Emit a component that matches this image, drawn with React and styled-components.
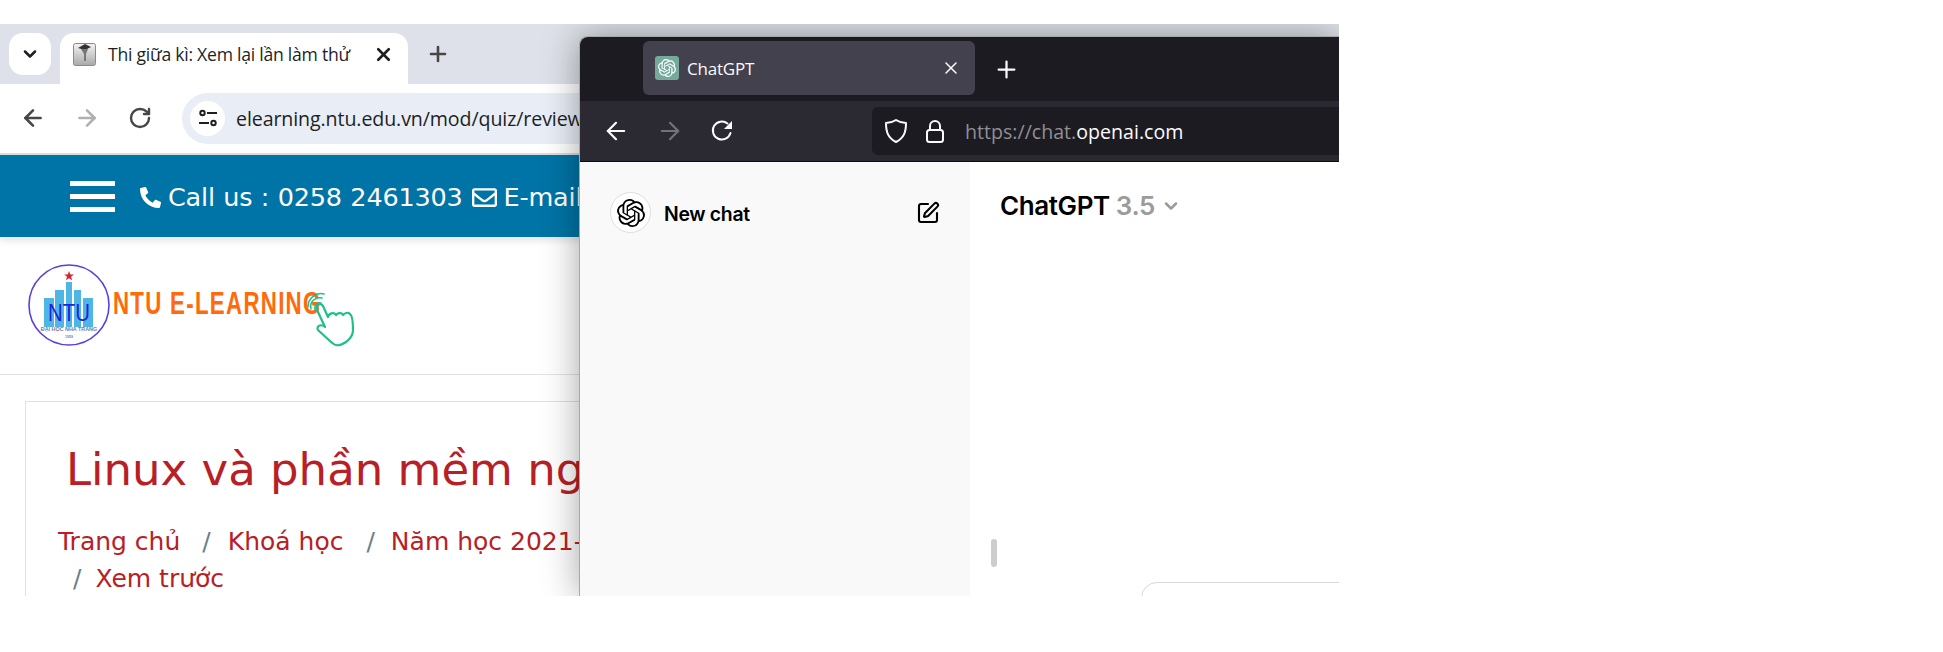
import React from "react";
import styled, { createGlobalStyle } from "styled-components";
import { ArrowLeft, ArrowRight, RotateCw, ChevronDown, X, Plus, SquarePen } from "lucide-react";
import { SiOpenai } from "react-icons/si";
import { FaPhone, FaRegEnvelope } from "react-icons/fa";

const Global = createGlobalStyle`
  html, body { margin: 0; padding: 0; background: #fff; }
  body { font-family: "Noto Sans", sans-serif; }
  * { box-sizing: border-box; }
`;

const Stage = styled.div`
  position: relative;
  width: 1339px;
  height: 572px;
  margin-top: 24px;
  overflow: hidden;
`;
const ChromeWindow = styled.div`
  width: 1339px;
  height: 572px;
  display: flex;
  flex-direction: column;
`;
const ChromeTabs = styled.div`
  height: 60px;
  flex: none;
  background: #dee1e9;
  display: flex;
  align-items: flex-start;
  padding: 9px 0 0 9px;
`;
const TabSearch = styled.div`
  width: 42px;
  height: 42px;
  border-radius: 14px;
  background: #fff;
  display: flex;
  align-items: center;
  justify-content: center;
  color: #1f1f1f;
  margin-right: 9px;
`;
const ChromeTab = styled.div`
  width: 348px;
  height: 51px;
  background: #fff;
  border-radius: 14px 14px 0 0;
  display: flex;
  align-items: center;
  padding: 0 14px 9px 13px;
  color: #1f1f1f;
`;
const TabTitle = styled.span`
  flex: 1;
  font-size: 17.6px;
  margin-left: 12px;
  white-space: nowrap;
  font-family: "Open Sans", sans-serif;
  letter-spacing: -0.25px;
`;
const NewTab = styled.div`
  margin: 9px 0 0 18px;
  color: #474747;
  display: flex;
`;
const ChromeBar = styled.div`
  height: 71px;
  flex: none;
  background: #fff;
  border-bottom: 2px solid #e0e0e0;
  border-radius: 14px 0 0 0;
  display: flex;
  align-items: center;
  padding: 0 0 1px 20px;
  gap: 28px;
`;
const Omnibox = styled.div`
  width: 600px;
  height: 51px;
  margin-left: 2px;
  border-radius: 26px;
  background: #e9edf6;
  display: flex;
  align-items: center;
  padding-left: 8px;
`;
const SiteBadge = styled.div`
  width: 35px;
  height: 35px;
  border-radius: 50%;
  background: #fff;
  display: flex;
  align-items: center;
  justify-content: center;
`;
const UrlText = styled.span`
  margin-left: 11px;
  font-size: 19.6px;
  color: #1f1f1f;
  font-family: "Open Sans", sans-serif;
  letter-spacing: -0.1px;
  white-space: nowrap;
`;
const BlueBar = styled.div`
  height: 82px;
  flex: none;
  background: #0074a6;
  color: #fff;
  display: flex;
  align-items: center;
  padding: 2px 0 0 70px;
  box-shadow: 0 3px 8px rgba(0, 0, 0, 0.12);
  position: relative;
  font-family: "DejaVu Sans", sans-serif;
`;
const Burger = styled.div`
  width: 45px;
  height: 31px;
  margin: -2px 25px 0 0;
  display: flex;
  flex-direction: column;
  justify-content: space-between;
  & > i { display: block; height: 5px; background: #fff; }
`;
const ContactItem = styled.span`
  display: flex;
  align-items: center;
  gap: 7px;
  font-size: 25.5px;
  white-space: nowrap;
  margin-right: 9px;
  letter-spacing: -0.2px;
  word-spacing: 0.6px;
`;
const LogoRow = styled.div`
  height: 138px;
  flex: none;
  padding: 18px 0 0 20px;
  border-bottom: 1px solid #e3e3e3;
`;
const Card = styled.div`
  flex: 1;
  margin: 26px 0 0 25px;
  border: 1px solid #e0e0e0;
  border-bottom: 0;
  padding: 39px 0 0 40px;
  font-family: "DejaVu Sans", sans-serif;
  color: #b82025;
`;
const CourseTitle = styled.h1`
  margin: 0;
  font-size: 45px;
  line-height: 58px;
  font-weight: 400;
  white-space: nowrap;
`;
const Trail = styled.div`
  display: flex;
  font-size: 25px;
  line-height: 37px;
  white-space: nowrap;
  margin-left: ${(p) => p.$indent}px;
  margin-top: ${(p) => p.$top || 0}px;
`;
const Slash = styled.span`
  color: #6c7f8f;
  margin: 0 ${(p) => p.$right}px 0 ${(p) => p.$left}px;
`;
const CrumbAfter = styled.span`
  margin-left: 14px;
`;

const FoxWindow = styled.div`
  position: absolute;
  left: 579px;
  top: 12px;
  width: 760px;
  height: 560px;
  border-left: 1px solid #a8a8a8;
  border-top: 1px solid #a8a8a8;
  border-radius: 8px 0 0 0;
  box-shadow: 0 0 36px rgba(0, 0, 0, 0.36);
  display: flex;
  flex-direction: column;
`;
const FoxTabs = styled.div`
  height: 64px;
  flex: none;
  background: #1c1b22;
  border-radius: 8px 0 0 0;
  display: flex;
  align-items: flex-start;
  padding: 4px 0 0 63px;
`;
const FoxTab = styled.div`
  width: 332px;
  height: 54px;
  border-radius: 6px;
  background: #42414d;
  color: #fbfbfe;
  display: flex;
  align-items: center;
  padding: 0 14px 0 12px;
`;
const Favicon = styled.div`
  width: 24px;
  height: 24px;
  border-radius: 3px;
  background: #74aa9c;
  color: #fff;
  display: flex;
  align-items: center;
  justify-content: center;
`;
const FoxTabTitle = styled.span`
  flex: 1;
  margin-left: 8px;
  font-size: 17px;
  font-family: "Open Sans", sans-serif;
  letter-spacing: -0.2px;
`;
const FoxPlus = styled.div`
  margin: 15px 0 0 18px;
  color: #fbfbfe;
  display: flex;
`;
const FoxBar = styled.div`
  height: 61px;
  flex: none;
  background: #2b2a33;
  border-bottom: 1px solid #0c0c0d;
  display: flex;
  align-items: center;
  padding: 0 0 0 22px;
`;
const FoxNav = styled.div`
  width: 54px;
  display: flex;
  color: ${(p) => (p.$off ? "#73727a" : "#fbfbfe")};
`;
const FoxUrl = styled.div`
  flex: 1;
  height: 48px;
  margin-left: 108px;
  border-radius: 6px 0 0 6px;
  background: #1c1b22;
  display: flex;
  align-items: center;
  padding-left: 12px;
  color: #fbfbfe;
  font-family: "Open Sans", sans-serif;
  font-size: 19.6px;
  gap: 17px;
`;
const Domain = styled.span`
  color: #8f8f94;
  margin-left: 3px;
  & > b { color: #fbfbfe; font-weight: 400; }
`;
const FoxPage = styled.div`
  flex: 1;
  display: flex;
  min-height: 0;
  font-family: Inter, sans-serif;
`;
const Sidebar = styled.div`
  width: 390px;
  flex: none;
  background: #f9f9f9;
  padding: 30px 30px 0 30px;
`;
const NewChatRow = styled.div`
  display: flex;
  align-items: center;
  color: #000;
`;
const LogoDisc = styled.div`
  width: 41px;
  height: 41px;
  border-radius: 50%;
  background: #fff;
  border: 1px solid #dedede;
  display: flex;
  align-items: center;
  justify-content: center;
`;
const NewChatLabel = styled.span`
  flex: 1;
  margin: 2px 0 0 13px;
  font-size: 19.4px;
  font-weight: 600;
  letter-spacing: -0.3px;
`;
const Main = styled.div`
  flex: 1;
  position: relative;
  background: #fff;
  padding: 28px 0 0 30px;
`;
const ModelName = styled.div`
  display: flex;
  align-items: center;
  gap: 6px;
  font-size: 26px;
  line-height: 32px;
  font-weight: 600;
  color: #000;
  letter-spacing: -0.4px;
  & > span { color: #9b9b9b; }
`;
const Thumb = styled.div`
  position: absolute;
  left: 21px;
  top: 377px;
  width: 6px;
  height: 28px;
  border-radius: 3px;
  background: #cdcdcd;
`;
const Composer = styled.div`
  position: absolute;
  left: 171px;
  top: 420px;
  width: 320px;
  height: 60px;
  border: 1px solid #d9d9d9;
  border-radius: 16px;
`;

const Tune = () => (
  <svg width="20" height="20" viewBox="0 0 20 20" fill="none" stroke="#1f1f1f" strokeWidth="2">
    <circle cx="4.5" cy="5" r="2.2" />
    <line x1="9" y1="5" x2="19" y2="5" />
    <line x1="1" y1="15" x2="11" y2="15" />
    <circle cx="15.5" cy="15" r="2.2" />
  </svg>
);
const MoodleIcon = () => (
  <svg width="23" height="23" viewBox="0 0 23 23">
    <defs>
      <linearGradient id="mg" x1="0" y1="0" x2="0" y2="1">
        <stop offset="0" stopColor="#f4f4f4" />
        <stop offset="1" stopColor="#a8a8a8" />
      </linearGradient>
    </defs>
    <rect x="0.5" y="0.5" width="22" height="22" rx="2" fill="url(#mg)" stroke="#8a8a8a" />
    <path d="M5 5l7-4 6 3-6 3z" fill="#333" />
    <path d="M8 6h7l-2 5v7h-2v-7z" fill="#777" />
  </svg>
);
const Shield = () => (
  <svg width="24" height="26" viewBox="0 0 24 26" fill="none" stroke="#fbfbfe" strokeWidth="2">
    <path d="M12 2c3 2 6 3 10 3 0 9-2 15-10 19C4 20 2 14 2 5c4 0 7-1 10-3z" strokeLinejoin="round" />
  </svg>
);
const Lock = () => (
  <svg width="20" height="25" viewBox="0 0 20 25" fill="none" stroke="#fbfbfe" strokeWidth="2">
    <rect x="2" y="11" width="16" height="12" rx="2.5" />
    <path d="M5 11V7a5 5 0 0 1 10 0v4" />
  </svg>
);
const FoxReload = () => (
  <svg width="24" height="24" viewBox="0 0 24 24" fill="none" stroke="#fbfbfe" strokeWidth="2">
    <path d="M20.5 14a9 9 0 1 1-3-9.5" strokeLinecap="round" />
    <path d="M22 2v8h-8z" fill="#fbfbfe" stroke="none" />
  </svg>
);
const Logo = () => (
  <svg width="340" height="100" viewBox="0 0 340 100" style={{ display: "block" }}>
    <circle cx="49" cy="50" r="40" fill="#fff" stroke="#5a3fe0" strokeWidth="1.6" />
    <path d="M49 16l1.3 3.4 3.6.1-2.8 2.2 1 3.5-3.1-2-3 2 1-3.5-2.8-2.2 3.6-.1z" fill="#d8232a" />
    <g fill="#4db6e4">
      <rect x="24" y="43" width="10" height="29" />
      <rect x="35" y="35" width="9" height="37" />
      <rect x="46" y="27" width="6" height="45" />
      <rect x="54" y="35" width="7" height="37" />
      <rect x="63" y="43" width="10" height="29" />
    </g>
    <text x="0" y="0" transform="translate(49 66) scale(0.85 1)" textAnchor="middle" fontSize="24" fontFamily="Liberation Sans" fill="#2222dd">NTU</text>
    <text x="49" y="76" textAnchor="middle" fontSize="5.4" fontFamily="Liberation Sans" fontWeight="700" fill="#7a7a9a">ĐẠI HỌC NHA TRANG</text>
    <text x="49" y="83" textAnchor="middle" fontSize="3.6" fontFamily="Liberation Sans" fontWeight="700" fill="#7a7a9a">1959</text>
    <text x="0" y="0" transform="translate(93 59) scale(0.72 1)" fontSize="31" fontFamily="Liberation Sans" fontWeight="700" fill="#ff6a0a" textLength="288" lengthAdjust="spacing">NTU E-LEARNING</text>
    <g fill="none" stroke="#1fbf8a" strokeLinecap="round" strokeLinejoin="round">
      <path d="M291 54a9 9 0 0 1 11-11 M288 52a13 13 0 0 1 16-13 M296 56a5 5 0 0 1 5-8" strokeWidth="1.5" />
      <path
        d="M297 51c2-3 5-2 6 0l5 11c1-4 6-5 8-2 1-2 6-3 7 0 2-2 5-3 7-1 3 2 3 10 3 16 0 6-3 9-7 12-3 2-7 4-10 3-2 0-3-2-5-3l-13-12c-2-3 2-7 7-3l-7-15c-1-2-1-4-1-6z"
        strokeWidth="2.2"
      />
    </g>
  </svg>
);

export default function App() {
  return (
    <>
      <Global />
      <Stage>
        <ChromeWindow>
          <ChromeTabs>
            <TabSearch><ChevronDown size={20} strokeWidth={3} /></TabSearch>
            <ChromeTab>
              <MoodleIcon />
              <TabTitle>Thi giữa kì: Xem lại lần làm thử</TabTitle>
              <X size={21} strokeWidth={3} />
            </ChromeTab>
            <NewTab><Plus size={24} strokeWidth={2.6} /></NewTab>
          </ChromeTabs>
          <ChromeBar>
            <ArrowLeft size={26} strokeWidth={2.4} color="#474747" />
            <ArrowRight size={26} strokeWidth={2.4} color="#b0b0b0" />
            <RotateCw size={24} strokeWidth={2.4} color="#474747" />
            <Omnibox>
              <SiteBadge><Tune /></SiteBadge>
              <UrlText>elearning.ntu.edu.vn/mod/quiz/review.php</UrlText>
            </Omnibox>
          </ChromeBar>
          <BlueBar>
            <Burger><i /><i /><i /></Burger>
            <ContactItem><FaPhone size={21} style={{ transform: "scaleX(-1)" }} />Call us : 0258 2461303</ContactItem>
            <ContactItem><FaRegEnvelope size={25} />E-mail</ContactItem>
          </BlueBar>
          <LogoRow><Logo /></LogoRow>
          <Card>
            <CourseTitle>Linux và phần mềm nguồn mở</CourseTitle>
            <Trail $indent={-8} $top={24}>
              Trang chủ<Slash $left={22} $right={17}>/</Slash>Khoá học<Slash $left={23} $right={16}>/</Slash>Năm học 2021-2022
            </Trail>
            <Trail $indent={7}>
              <Slash $left={0} $right={0}>/</Slash><CrumbAfter>Xem trước</CrumbAfter>
            </Trail>
          </Card>
        </ChromeWindow>
        <FoxWindow>
          <FoxTabs>
            <FoxTab>
              <Favicon><SiOpenai size={18} /></Favicon>
              <FoxTabTitle>ChatGPT</FoxTabTitle>
              <X size={20} strokeWidth={1.8} />
            </FoxTab>
            <FoxPlus><Plus size={27} strokeWidth={2} /></FoxPlus>
          </FoxTabs>
          <FoxBar>
            <FoxNav><ArrowLeft size={28} strokeWidth={1.9} /></FoxNav>
            <FoxNav $off><ArrowRight size={28} strokeWidth={1.9} /></FoxNav>
            <FoxNav><FoxReload /></FoxNav>
            <FoxUrl>
              <Shield />
              <Lock />
              <Domain>https://chat.<b>openai.com</b></Domain>
            </FoxUrl>
          </FoxBar>
          <FoxPage>
            <Sidebar>
              <NewChatRow>
                <LogoDisc><SiOpenai size={28} /></LogoDisc>
                <NewChatLabel>New chat</NewChatLabel>
                <SquarePen size={24} strokeWidth={2.1} />
              </NewChatRow>
            </Sidebar>
            <Main>
              <ModelName>ChatGPT <span>3.5</span><ChevronDown size={20} strokeWidth={3} color="#9b9b9b" /></ModelName>
              <Thumb />
              <Composer />
            </Main>
          </FoxPage>
        </FoxWindow>
      </Stage>
    </>
  );
}
